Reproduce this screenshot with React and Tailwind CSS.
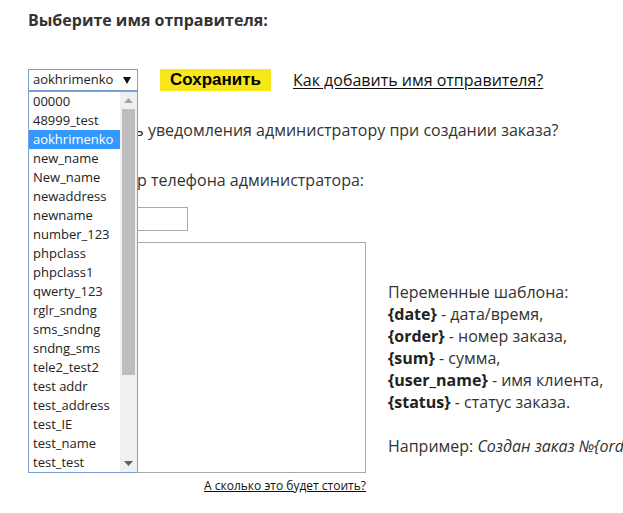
import React from "react";

const SENDERS = [
  "00000",
  "48999_test",
  "aokhrimenko",
  "new_name",
  "New_name",
  "newaddress",
  "newname",
  "number_123",
  "phpclass",
  "phpclass1",
  "qwerty_123",
  "rglr_sndng",
  "sms_sndng",
  "sndng_sms",
  "tele2_test2",
  "test addr",
  "test_address",
  "test_IE",
  "test_name",
  "test_test",
];

const VARIABLES = [
  { name: "{date}", text: " - дата/время," },
  { name: "{order}", text: " - номер заказа," },
  { name: "{sum}", text: " - сумма," },
  { name: "{user_name}", text: " - имя клиента," },
  { name: "{status}", text: " - статус заказа." },
];

const SenderDropdown = () => {
  const selected = "aokhrimenko";

  return (
    <div className="absolute left-[28px] top-[91px] w-[110px] h-[382px] border border-[#7a9ed8] bg-white flex">
      {/* Options */}
      <div className="flex-1 flex flex-col">
        {SENDERS.map((name) => (
          <div
            key={name}
            className={`h-[19px] pl-[4px] text-[13px] leading-[19px] whitespace-nowrap ${
              name === selected ? "bg-[#3399ff] text-white" : "text-[#222]"
            }`}
          >
            {name}
          </div>
        ))}
      </div>

      {/* Scrollbar */}
      <div className="w-[17px] bg-[#f0f0f0] flex flex-col items-center">
        <div className="h-[17px] flex items-center justify-center">
          <svg width="9" height="5" viewBox="0 0 9 5">
            <path d="M0 5 L4.5 0 L9 5 Z" fill="#a3a3a3" />
          </svg>
        </div>
        <div className="w-[13px] h-[266px] bg-[#bdbdbd]" />
        <div className="flex-1" />
        <div className="h-[17px] flex items-center justify-center">
          <svg width="9" height="5" viewBox="0 0 9 5">
            <path d="M0 0 L4.5 5 L9 0 Z" fill="#606060" />
          </svg>
        </div>
      </div>
    </div>
  );
};

const App = () => {
  return (
    <div
      className="relative w-[623px] h-[513px] overflow-hidden bg-white pl-[28px] text-[#333]"
      style={{ fontFamily: '"Open Sans", "Noto Sans", sans-serif' }}
    >
      {/* Title */}
      <h2 className="pt-[10px] text-[16px] leading-[20px] font-bold text-[#333]">
        Выберите имя отправителя:
      </h2>

      {/* Sender row */}
      <div className="mt-[39px] flex items-center h-[22px]">
        <div className="w-[110px] h-[22px] border border-[#7a9ed8] flex items-center justify-between pl-[4px] pr-[6px] text-[13px] text-[#222]">
          <span>aokhrimenko</span>
          <svg width="8" height="7" viewBox="0 0 8 7">
            <path d="M0 0 L8 0 L4 7 Z" fill="#111" />
          </svg>
        </div>
        <button
          className="ml-[22px] w-[111px] h-[22px] bg-[#f7e61a] text-[17px] font-bold text-black leading-[22px]"
          style={{ fontFamily: '"Liberation Sans", Arial, sans-serif' }}
        >
          Сохранить
        </button>
        <a href="#" className="ml-[22px] text-[16px] text-[#111] underline underline-offset-2">
          Как добавить имя отправителя?
        </a>
      </div>

      {/* Admin notification */}
      <label className="mt-[28px] flex items-center h-[22px] text-[16px]">
        <input type="checkbox" className="w-[13px] h-[13px] mr-[10px]" />
        <span>Отправлять уведомления администратору при создании заказа?</span>
      </label>

      <div className="mt-[28px] h-[22px] text-[16px] leading-[22px]">
        Введите номер телефона администратора:
      </div>

      <input
        type="text"
        className="mt-[16px] block w-[160px] h-[24px] border border-[#aaa] outline-none"
      />

      {/* Template */}
      <div className="mt-[11px] flex items-start">
        <div className="flex flex-col items-end">
          <textarea className="block w-[338px] h-[231px] border border-[#aaa] resize-none outline-none" />
          <a href="#" className="mt-[5px] text-[12px] leading-[16px] text-[#111] underline">
            А сколько это будет стоить?
          </a>
        </div>

        <div className="ml-[22px] mt-[39px] text-[16px] leading-[22px] whitespace-nowrap">
          <div>Переменные шаблона:</div>
          {VARIABLES.map((v) => (
            <div key={v.name}>
              <b className="font-bold text-[#222]">{v.name}</b>
              {v.text}
            </div>
          ))}
          <div className="h-[22px]" />
          <div>
            Например: <i>Создан заказ №{"{order}"} на сумму {"{sum}"}</i>
          </div>
        </div>
      </div>

      <SenderDropdown />
    </div>
  );
};

export default App;
